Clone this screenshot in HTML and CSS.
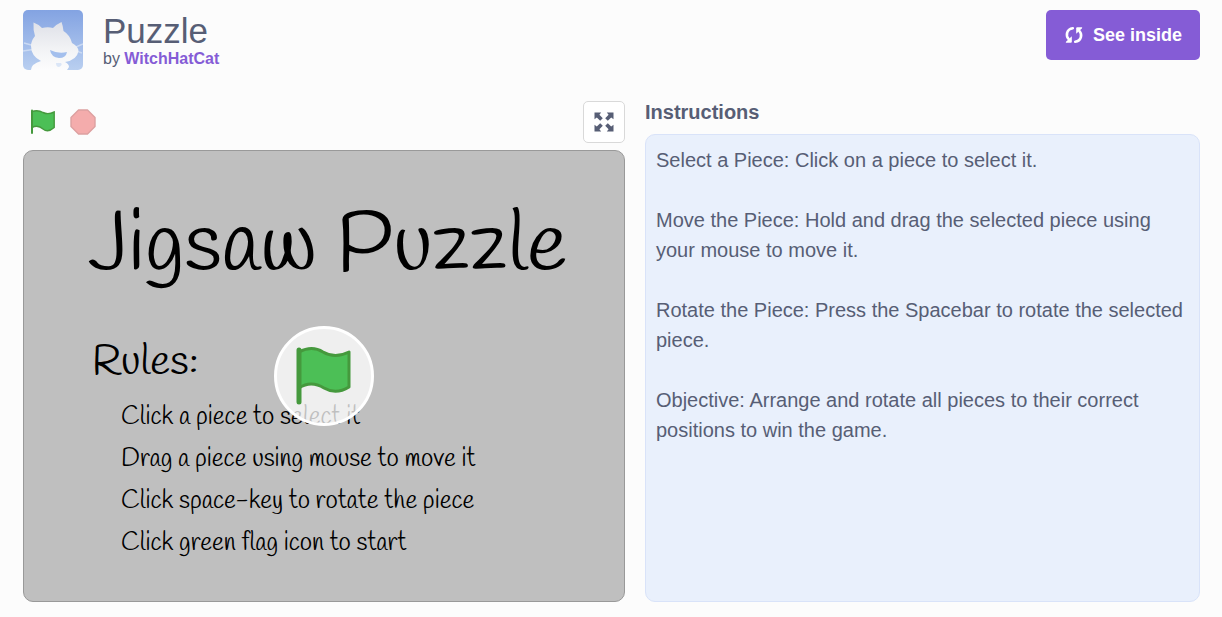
FILE: index.html
```html
<!DOCTYPE html>
<html lang="en">
<head>
<meta charset="utf-8">
<meta name="viewport" content="width=device-width, initial-scale=1">
<title>Puzzle</title>
<link rel="stylesheet" href="styles.css">
</head>
<body>
<div class="page">
  <header class="header">
    <svg class="avatar" viewBox="0 0 60 60" role="img" aria-label="WitchHatCat avatar">
      <defs>
        <linearGradient id="sky" x1="0" y1="0" x2="0" y2="1"><stop offset="0" stop-color="#83a3e2"/><stop offset="1" stop-color="#b9cff0"/></linearGradient>
        <linearGradient id="fur" x1="0" y1="0" x2="0" y2="1"><stop offset="0" stop-color="#dfe1e8"/><stop offset=".6" stop-color="#f3f4f6"/><stop offset="1" stop-color="#fcfcfd"/></linearGradient>
      </defs>
      <rect width="60" height="60" fill="url(#sky)"/>
      <path d="M1 33L10 35.500M0 41L10 39.500M60 34L53 37M59 43L53 41" stroke="#cbdaf3" stroke-width="1.500" fill="none"/>
      <path d="M10.500 12.500Q15 14 19 18Q25 16.500 30 18Q34 14 38.500 12Q40 16 40.500 21Q47 25 49 33Q55 36 55.500 41Q54 50 42 52Q46 54 46 57L44 60H8Q8 54 18 51Q8 46 8 36Q8 31 12 26Q10 20 10.500 12.500Z" fill="url(#fur)"/>
      <path d="M27 40Q35 44 44 42Q43 48 36 48Q28 47 27 40Z" fill="#a3bfed"/>
      <path d="M33 53L38 53Q40 55 36 57Q33 57 33 53Z" fill="#dbe6f7"/>
    </svg>
    <div class="heading">
      <h1 class="title">Puzzle</h1>
      <p class="byline">by <a class="author" href="#author">WitchHatCat</a></p>
    </div>
    <button class="see-inside" type="button">
      <svg class="see-icon" viewBox="0 0 20 18" aria-hidden="true">
        <g id="turn"><path d="M8.800 2.200C2.500 3 1.500 9.500 4.600 13" fill="none" stroke="#fff" stroke-width="2.600" stroke-linecap="round"/><path d="M7.800 10.200V15.800Q7.800 16.800 6.800 16.800H2Q1.500 16.200 2.200 15.500Z"/></g>
        <use href="#turn" transform="rotate(180 10 9)"/>
      </svg>
      <span>See inside</span>
    </button>
  </header>

  <main class="content">
    <section class="player" aria-label="Project player">
      <div class="controls">
        <button class="control" type="button" aria-label="Go">
          <svg class="control-icon" viewBox="0 0 26 26" aria-hidden="true"><path d="M2 2.500Q8 .5 13 3.500Q18 6 24.200 3V18.500Q18 24 13 20Q8 15.500 2 18.500" fill="#4cbf56" stroke="#45993d" stroke-width="1.400"/><path d="M2 1.500V24" stroke="#45993d" stroke-width="2" stroke-linecap="round"/></svg>
        </button>
        <button class="control" type="button" aria-label="Stop">
          <svg class="control-icon" viewBox="0 0 26 26" aria-hidden="true"><path d="M8.500 1H17.500L25 8.500V17.500L17.500 25H8.500L1 17.500V8.500Z" fill="#f4acac" stroke="#dca0a0" stroke-width="1.400" stroke-linejoin="round"/></svg>
        </button>
        <button class="fullscreen" type="button" aria-label="Full screen">
          <svg class="full-icon" viewBox="0 0 20 20" aria-hidden="true"><g id="arrow"><path d="M.5 .5H7.200L5.400 2.800L8.800 6.200L6.200 8.800L2.800 5.400L.5 7.200Z"/></g><use href="#arrow" transform="rotate(90 10 10)"/><use href="#arrow" transform="rotate(180 10 10)"/><use href="#arrow" transform="rotate(270 10 10)"/></svg>
        </button>
      </div>
      <div class="stage">
        <h2 class="game-title">Jigsaw Puzzle</h2>
        <h3 class="rules-title">Rules:</h3>
        <ul class="rules">
          <li>Click a piece to select it</li>
          <li>Drag a piece using mouse to move it</li>
          <li>Click space-key to rotate the piece</li>
          <li>Click green flag icon to start</li>
        </ul>
        <button class="start" type="button" aria-label="Start project">
          <svg class="start-icon" viewBox="0 0 58 60" aria-hidden="true"><path d="M4 6Q17 -1 28 6Q40 13 54 6V41Q41 49 29 42Q16 34 4 42" fill="#4cbf56" stroke="#45993d" stroke-width="3" stroke-linejoin="round"/><path d="M4 4V56" stroke="#45993d" stroke-width="5" stroke-linecap="round"/></svg>
        </button>
      </div>
    </section>

    <section class="notes">
      <h2 class="notes-title">Instructions</h2>
      <div class="notes-box">
        <p>Select a Piece: Click on a piece to select it.</p>
        <p>Move the Piece: Hold and drag the selected piece using your mouse to move it.</p>
        <p>Rotate the Piece: Press the Spacebar to rotate the selected piece.</p>
        <p>Objective: Arrange and rotate all pieces to their correct positions to win the game.</p>
      </div>
    </section>
  </main>
</div>
</body>
</html>
```
FILE: styles.css
```css
* { box-sizing: border-box; }
body {
  margin: 0;
  background: #fcfcfc;
  color: #575e75;
  font-family: "Liberation Sans", Arial, sans-serif;
}
h1, h2, h3, p, ul { margin: 0; padding: 0; }
button { padding: 0; border: 0; background: none; font: inherit; cursor: pointer; }
svg { display: block; }

.page { padding: 10px 22px 15px 23px; }

.header { display: flex; align-items: flex-start; gap: 20px; }
.avatar { width: 60px; height: 60px; border-radius: 5px; }
.heading { flex: 1; }
.title { font-size: 35px; line-height: 41px; font-weight: 400; }
.byline { font-size: 16px; line-height: 16px; }
.author { color: #855cd6; font-weight: 700; text-decoration: none; }
.see-inside {
  display: flex;
  align-items: center;
  gap: 9px;
  height: 50px;
  padding: 0 18px 1px;
  border-radius: 5px;
  background: #855cd6;
  color: #fff;
  font-size: 18px;
  line-height: 20px;
  font-weight: 700;
}
.see-icon { width: 20px; height: 18px; fill: #fff; }

.content {
  display: grid;
  grid-template-columns: 602fr 555fr;
  gap: 20px;
  margin-top: 31px;
}
.player { display: flex; flex-direction: column; gap: 7px; min-width: 0; }
.controls { display: flex; align-items: center; gap: 14px; padding-left: 7px; }
.control-icon { width: 26px; height: 26px; }
.fullscreen {
  display: grid;
  place-items: center;
  width: 42px;
  height: 42px;
  margin-left: auto;
  border: 1px solid #d9d9d9;
  border-radius: 5px;
  background: #fff;
}
.full-icon { width: 20px; height: 20px; fill: #575e75; }

.stage {
  position: relative;
  aspect-ratio: 4 / 3;
  padding: 47px 50px 0 64px;
  border: 1px solid #999;
  border-radius: 10px;
  background: #bfbfbf;
  color: #000;
  font-family: Handlee, Lato, sans-serif;
  overflow: hidden;
}
.game-title { font-size: 85px; line-height: 100px; font-weight: 400; white-space: nowrap; }
.rules-title { margin-top: 40px; padding-left: 4px; font-size: 42px; line-height: 50px; font-weight: 400; }
.rules { padding-left: 33px; margin-top: 9px; list-style: none; font-size: 25px; line-height: 42px; }
.start {
  position: absolute;
  top: 50%;
  left: 50%;
  display: grid;
  place-items: center;
  width: 100px;
  height: 100px;
  transform: translate(-50%, -50%);
  border: 3px solid #fff;
  border-radius: 50%;
  background: rgba(255, 255, 255, 0.75);
}
.start-icon { width: 58px; height: 60px; }

.notes { display: flex; flex-direction: column; gap: 10px; min-width: 0; }
.notes-title { font-size: 20px; line-height: 23px; }
.notes-box {
  display: flex;
  flex: 1;
  flex-direction: column;
  gap: 30px;
  padding: 10px;
  border: 1px solid #d9e3f9;
  border-radius: 10px;
  background: #e9f0fc;
  font-size: 20px;
  line-height: 30px;
}
```
